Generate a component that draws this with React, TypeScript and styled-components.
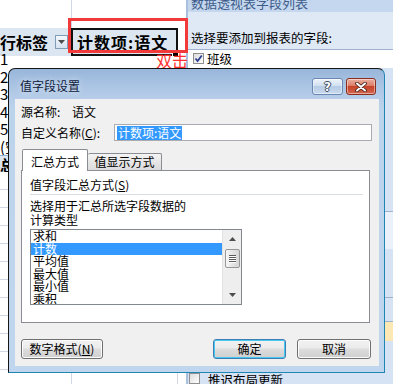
import React from "react";
import styled, { createGlobalStyle } from "styled-components";

const GlobalStyle = createGlobalStyle`
  html, body { margin: 0; padding: 0; background: #ffffff; }
  body {
    width: 393px; height: 384px; overflow: hidden;
    font-family: "Noto Sans CJK SC", "Noto Sans", sans-serif;
  }
`;

const Page = styled.div`
  position: relative;
  width: 393px;
  height: 384px;
  display: flex;
  overflow: hidden;
  background: #ffffff;
`;

/* ---------- worksheet ---------- */
const Sheet = styled.div`
  width: 186px;
  flex: none;
  display: flex;
  flex-direction: column;
  font-size: 15px;
  color: #000;
`;

const SheetRow = styled.div<{ $h: number; $grid?: boolean; $bg?: string; $topLine?: boolean }>`
  flex: none;
  height: ${(p) => p.$h}px;
  box-sizing: border-box;
  display: grid;
  grid-template-columns: 72px 106px 1fr;
  background: ${(p) => p.$bg ?? "transparent"};
  border-bottom: ${(p) => (p.$grid ? "1px solid #d0d7e5" : "none")};
  border-top: ${(p) => (p.$topLine ? "1px solid #95b3d7" : "none")};
`;

const Cell = styled.div<{ $line?: boolean; $bold?: boolean }>`
  display: flex;
  align-items: center;
  white-space: nowrap;
  overflow: hidden;
  font-weight: ${(p) => (p.$bold ? 700 : 400)};
  border-right: ${(p) => (p.$line ? "1px solid #d0d7e5" : "none")};
`;

const HeaderRow = styled.div`
  flex: none;
  height: 22px;
  display: grid;
  grid-template-columns: 71px 107px 1fr;
`;

const LabelCell = styled.div`
  display: flex;
  align-items: center;
  justify-content: space-between;
  background: #dce6f1;
  padding-right: 3px;
  font-size: 16px;
  font-weight: 700;
  white-space: nowrap;
`;

const DropButton = styled.div`
  width: 13px;
  height: 14px;
  box-sizing: border-box;
  border: 1px solid #7f9db9;
  background: linear-gradient(#f4f8fc, #d6e2f1);
  display: flex;
  align-items: center;
  justify-content: center;
`;

const SelectedCell = styled.div`
  position: relative;
  box-sizing: border-box;
  border: 2px solid #111;
  background: #dce6f1;
  display: flex;
  align-items: center;
  padding-left: 4px;
  font-size: 16px;
  font-weight: 700;
  letter-spacing: 1px;
  white-space: nowrap;
`;

const FillHandle = styled.div`
  position: absolute;
  right: -3px;
  bottom: -3px;
  width: 5px;
  height: 5px;
  background: #000;
  border: 1px solid #fff;
`;

const RedFrame = styled.div`
  position: absolute;
  left: 68px;
  top: 18px;
  width: 120px;
  height: 35px;
  box-sizing: border-box;
  border: 3px solid #f23a3a;
  z-index: 1;
`;

const RedNote = styled.div`
  position: absolute;
  left: 156px;
  top: 50px;
  font-size: 16px;
  line-height: 20px;
  color: #ff3030;
  z-index: 1;
`;

/* ---------- pivot field pane ---------- */
const Pane = styled.div`
  flex: 1;
  display: flex;
  flex-direction: column;
  border-left: 2px solid #a9c0dd;
  background: #d5e3f4;
  font-size: 12px;
  color: #000;
`;

const PaneTitle = styled.div`
  flex: none;
  height: 12px;
  overflow: hidden;
  background: #c4d7ee;
  padding-left: 3px;
  color: #3d5c8b;
  font-size: 13px;
  span { display: block; margin-top: -5px; line-height: 16px; }
`;

const PaneHead = styled.div`
  flex: none;
  height: 38px;
  box-sizing: border-box;
  background: #dfe9f5;
  border-bottom: 1px solid #9fb3cd;
  padding: 19px 0 0 3px;
  line-height: 14px;
  font-size: 12.5px;
`;

const FieldList = styled.div`
  flex: none;
  height: 18px;
  background: #ffffff;
  display: flex;
  flex-direction: column;
  padding-left: 5px;
`;

const FieldItem = styled.div`
  display: flex;
  align-items: center;
  gap: 3px;
  height: 17px;
  font-size: 12.5px;
`;

const CheckBox = styled.div`
  width: 11px;
  height: 11px;
  box-sizing: border-box;
  border: 1px solid #8f8f8f;
  background: linear-gradient(135deg, #dcdcdc, #ffffff);
  display: flex;
  align-items: center;
  justify-content: center;
`;

const AreaGap = styled.div<{ $h: number }>`
  flex: none;
  height: ${(p) => p.$h}px;
`;

const AreaBox = styled.div<{ $h: number; $bg?: string }>`
  flex: none;
  height: ${(p) => p.$h}px;
  box-sizing: border-box;
  border-top: 1px solid #9fb3cd;
  background: ${(p) => p.$bg ?? "#eaf1fa"};
  display: flex;
  align-items: center;
  padding-left: 8px;
  font-size: 13px;
  white-space: nowrap;
`;

const PaneFooter = styled.div`
  margin-top: auto;
  height: 11px;
  display: flex;
  align-items: flex-start;
  gap: 8px;
  padding-left: 1px;
  overflow: hidden;
  font-size: 12.5px;
  line-height: 13px;
`;

/* ---------- dialog ---------- */
const Dialog = styled.div`
  position: absolute;
  left: 8px;
  top: 68px;
  width: 377px;
  height: 305px;
  box-sizing: border-box;
  border: 1px solid #161616;
  border-right-color: #1f86b3;
  border-bottom-color: #1f86b3;
  border-radius: 7px 7px 0 0;
  background: linear-gradient(180deg, #98b6da 0px, #b2cae7 24px, #bcd3ec 40px, #c0d6ee 100%);
  padding: 0 5px 6px 6px;
  display: flex;
  flex-direction: column;
  z-index: 2;
  font-size: 12px;
  color: #000;
`;

const TitleBar = styled.div`
  flex: none;
  height: 30px;
  box-sizing: border-box;
  display: flex;
  align-items: flex-start;
  padding: 9px 3px 0 5px;
`;

const TitleText = styled.div`
  flex: 1;
  line-height: 16px;
  font-size: 12px;
  color: #10203a;
  text-shadow: 0 0 6px rgba(255, 255, 255, 0.7);
`;

const CaptionButtons = styled.div`
  display: flex;
  gap: 3px;
`;

const CaptionButton = styled.div<{ $close?: boolean }>`
  width: ${(p) => (p.$close ? 30 : 31)}px;
  height: 17px;
  box-sizing: border-box;
  border-radius: 3px;
  border: 1px solid ${(p) => (p.$close ? "#8a2d1d" : "#6a88b3")};
  background: ${(p) =>
    p.$close
      ? "linear-gradient(#eab0a2, #dc7d68 45%, #c64229 50%, #d3654d)"
      : "linear-gradient(#eef3fa, #d2e0f1 45%, #b6cbe5 50%, #c9daee)"};
  box-shadow: inset 0 0 0 1px rgba(255, 255, 255, 0.45);
  display: flex;
  align-items: center;
  justify-content: center;
`;

const HelpGlyph = styled.span`
  font-family: "DejaVu Sans", sans-serif;
  font-weight: 700;
  font-size: 12px;
  line-height: 12px;
  color: #fff;
  text-shadow: -1px 0 #3a4a60, 1px 0 #3a4a60, 0 -1px #3a4a60, 0 1px #3a4a60;
`;

const Client = styled.div`
  flex: 1;
  background: #f0f0f0;
  display: flex;
  flex-direction: column;
`;

const SourceRow = styled.div`
  margin-top: 6px;
  padding-left: 6px;
  display: flex;
  line-height: 14px;
`;

const FieldLabel = styled.div<{ $w: number }>`
  width: ${(p) => p.$w}px;
  flex: none;
  white-space: nowrap;
`;

const NameRow = styled.div`
  margin-top: 5px;
  padding: 0 7px 0 6px;
  height: 17px;
  display: flex;
  align-items: center;
`;

const TextInput = styled.div`
  flex: 1;
  height: 17px;
  box-sizing: border-box;
  border: 1px solid #a9abb0;
  background: #fff;
  padding-left: 2px;
  display: flex;
  align-items: center;
`;

const Selection = styled.span`
  background: #3399ff;
  color: #fff;
  line-height: 14px;
  padding: 0 1px;
`;

const TabStrip = styled.div`
  margin-top: 8px;
  padding-left: 7px;
  height: 21px;
  display: flex;
  align-items: flex-end;
  position: relative;
  z-index: 1;
`;

const Tab = styled.div<{ $active?: boolean }>`
  box-sizing: border-box;
  width: ${(p) => (p.$active ? 66 : 74)}px;
  height: ${(p) => (p.$active ? 22 : 17)}px;
  margin-bottom: ${(p) => (p.$active ? -1 : 0)}px;
  border: 1px solid #898c95;
  border-bottom: none;
  border-left: ${(p) => (p.$active ? "1px solid #898c95" : "none")};
  border-radius: 2px 2px 0 0;
  background: ${(p) => (p.$active ? "#ffffff" : "linear-gradient(#f4f4f4, #e6e6e6 50%, #dcdcdc)")};
  display: flex;
  align-items: center;
  justify-content: center;
  padding-top: ${(p) => (p.$active ? 2 : 0)}px;
  line-height: 14px;
`;

const TabPanel = styled.div`
  margin: 0 9px 0 6px;
  height: 153px;
  box-sizing: border-box;
  border: 1px solid #898c95;
  background: #fff;
  padding: 7px 6px 0 8px;
  display: flex;
  flex-direction: column;
`;

const GroupTitle = styled.div`
  line-height: 14px;
`;

const Separator = styled.div`
  margin-top: 2px;
  height: 1px;
  background: #d5dfe5;
`;

const Description = styled.div`
  margin-top: 4px;
  line-height: 14px;
`;

const ListBox = styled.div`
  margin-top: 2px;
  width: 212px;
  height: 76px;
  box-sizing: border-box;
  border: 1px solid #828790;
  display: flex;
  background: #fff;
`;

const ListItems = styled.div`
  flex: 1;
  overflow: hidden;
  display: flex;
  flex-direction: column;
`;

const ListItem = styled.div<{ $selected?: boolean }>`
  flex: none;
  height: 12.5px;
  line-height: 12.5px;
  padding-left: 2px;
  background: ${(p) => (p.$selected ? "#3399ff" : "transparent")};
  color: ${(p) => (p.$selected ? "#ffffff" : "#000000")};
`;

const ScrollBar = styled.div`
  width: 18px;
  flex: none;
  background: #eeeeee;
  border-left: 1px solid #e2e2e2;
  display: flex;
  flex-direction: column;
  align-items: center;
`;

const ArrowBox = styled.div`
  height: 18px;
  width: 100%;
  display: flex;
  align-items: center;
  justify-content: center;
`;

const Thumb = styled.div`
  margin-top: 1px;
  width: 15px;
  height: 19px;
  box-sizing: border-box;
  border: 1px solid #979797;
  border-radius: 2px;
  background: linear-gradient(90deg, #f7f7f7, #e4e4e4 50%, #d6d6d6);
  display: flex;
  flex-direction: column;
  align-items: center;
  justify-content: center;
  gap: 1px;
`;

const Grip = styled.div`
  width: 7px;
  height: 1px;
  background: #5a5a5a;
  box-shadow: 0 1px 0 #ffffff;
`;

const ButtonRow = styled.div`
  margin-top: 16px;
  padding: 0 8px 0 6px;
  display: flex;
  gap: 11px;
`;

const PushButton = styled.div<{ $w: number; $default?: boolean }>`
  width: ${(p) => p.$w}px;
  height: 20px;
  box-sizing: border-box;
  border-radius: 3px;
  border: 1px solid ${(p) => (p.$default ? "#3c7fb1" : "#707070")};
  box-shadow: ${(p) => (p.$default ? "inset 0 0 0 1px #48c8f0" : "inset 0 0 0 1px #fcfcfc")};
  background: linear-gradient(#f2f2f2, #ebebeb 45%, #dddddd 50%, #cfcfcf);
  display: flex;
  align-items: center;
  justify-content: center;
  line-height: 14px;
  white-space: nowrap;
`;

const Spacer = styled.div`
  flex: 1;
`;

const Key = styled.span`
  text-decoration: underline;
`;

const Arrow = ({ down }: { down?: boolean }) => (
  <svg width="7" height="4" viewBox="0 0 7 4">
    <path d={down ? "M0 0 H7 L3.5 4 Z" : "M0 4 H7 L3.5 0 Z"} fill="#4d4d4d" />
  </svg>
);

const Check = () => (
  <svg width="9" height="9" viewBox="0 0 9 9">
    <path d="M1.5 4.5 L3.6 7 L7.8 1.5" fill="none" stroke="#2a3f8f" strokeWidth="1.8" />
  </svg>
);

const CloseGlyph = () => (
  <svg width="12" height="10" viewBox="0 0 12 10">
    <path d="M2 1.5 L10 8.5 M10 1.5 L2 8.5" stroke="#3b1a14" strokeWidth="3.6" strokeLinecap="round" />
    <path d="M2 1.5 L10 8.5 M10 1.5 L2 8.5" stroke="#ffffff" strokeWidth="2" strokeLinecap="round" />
  </svg>
);

const pivotRows = ["1", "2", "3", "4", "5", "(空白)"];
const gridRows = Array.from({ length: 12 }, (_, i) => i);
const summaryTypes = ["求和", "计数", "平均值", "最大值", "最小值", "乘积"];

export default function App() {
  return (
    <>
      <GlobalStyle />
      <Page>
        <Sheet>
          <SheetRow $h={28}>
            <Cell $line />
            <Cell />
            <Cell />
          </SheetRow>
          <HeaderRow>
            <LabelCell>
              行标签
              <DropButton>
                <Arrow down />
              </DropButton>
            </LabelCell>
            <SelectedCell>
              计数项:语文
              <FillHandle />
            </SelectedCell>
            <Cell />
          </HeaderRow>
          {pivotRows.map((r) => (
            <SheetRow key={r} $h={17.5}>
              <Cell>{r}</Cell>
              <Cell />
              <Cell />
            </SheetRow>
          ))}
          <SheetRow $h={17} $bg="#dce6f1" $topLine>
            <Cell $bold>总计</Cell>
            <Cell />
            <Cell />
          </SheetRow>
          {gridRows.map((i) => (
            <SheetRow key={i} $h={18} $grid>
              <Cell $line />
              <Cell $line />
              <Cell />
            </SheetRow>
          ))}
        </Sheet>

        <Pane>
          <PaneTitle>
            <span>数据透视表字段列表</span>
          </PaneTitle>
          <PaneHead>选择要添加到报表的字段:</PaneHead>
          <FieldList>
            <FieldItem>
              <CheckBox>
                <Check />
              </CheckBox>
              班级
            </FieldItem>
          </FieldList>
          <AreaGap $h={143} />
          <AreaBox $h={38}>∑ 数值</AreaBox>
          <AreaGap $h={48} />
          <AreaBox $h={24} $bg="#d5e3f4">列标签</AreaBox>
          <AreaBox $h={20} $bg="#fde8b4">计数项:语文</AreaBox>
          <PaneFooter>
            <CheckBox />
            推迟布局更新
          </PaneFooter>
        </Pane>

        <RedFrame />
        <RedNote>双击</RedNote>

        <Dialog>
          <TitleBar>
            <TitleText>值字段设置</TitleText>
            <CaptionButtons>
              <CaptionButton>
                <HelpGlyph>?</HelpGlyph>
              </CaptionButton>
              <CaptionButton $close>
                <CloseGlyph />
              </CaptionButton>
            </CaptionButtons>
          </TitleBar>
          <Client>
            <SourceRow>
              <FieldLabel $w={51}>源名称:</FieldLabel>
              语文
            </SourceRow>
            <NameRow>
              <FieldLabel $w={93}>
                自定义名称(<Key>C</Key>):
              </FieldLabel>
              <TextInput>
                <Selection>计数项:语文</Selection>
              </TextInput>
            </NameRow>
            <TabStrip>
              <Tab $active>汇总方式</Tab>
              <Tab>值显示方式</Tab>
            </TabStrip>
            <TabPanel>
              <GroupTitle>
                值字段汇总方式(<Key>S</Key>)
              </GroupTitle>
              <Separator />
              <Description>
                选择用于汇总所选字段数据的
                <br />
                计算类型
              </Description>
              <ListBox>
                <ListItems>
                  {summaryTypes.map((t) => (
                    <ListItem key={t} $selected={t === "计数"}>
                      {t}
                    </ListItem>
                  ))}
                </ListItems>
                <ScrollBar>
                  <ArrowBox>
                    <Arrow />
                  </ArrowBox>
                  <Thumb>
                    <Grip />
                    <Grip />
                    <Grip />
                    <Grip />
                  </Thumb>
                  <Spacer />
                  <ArrowBox>
                    <Arrow down />
                  </ArrowBox>
                </ScrollBar>
              </ListBox>
            </TabPanel>
            <ButtonRow>
              <PushButton $w={82}>
                数字格式(<Key>N</Key>)
              </PushButton>
              <Spacer />
              <PushButton $w={73} $default>
                确定
              </PushButton>
              <PushButton $w={74}>取消</PushButton>
            </ButtonRow>
          </Client>
        </Dialog>
      </Page>
    </>
  );
}
